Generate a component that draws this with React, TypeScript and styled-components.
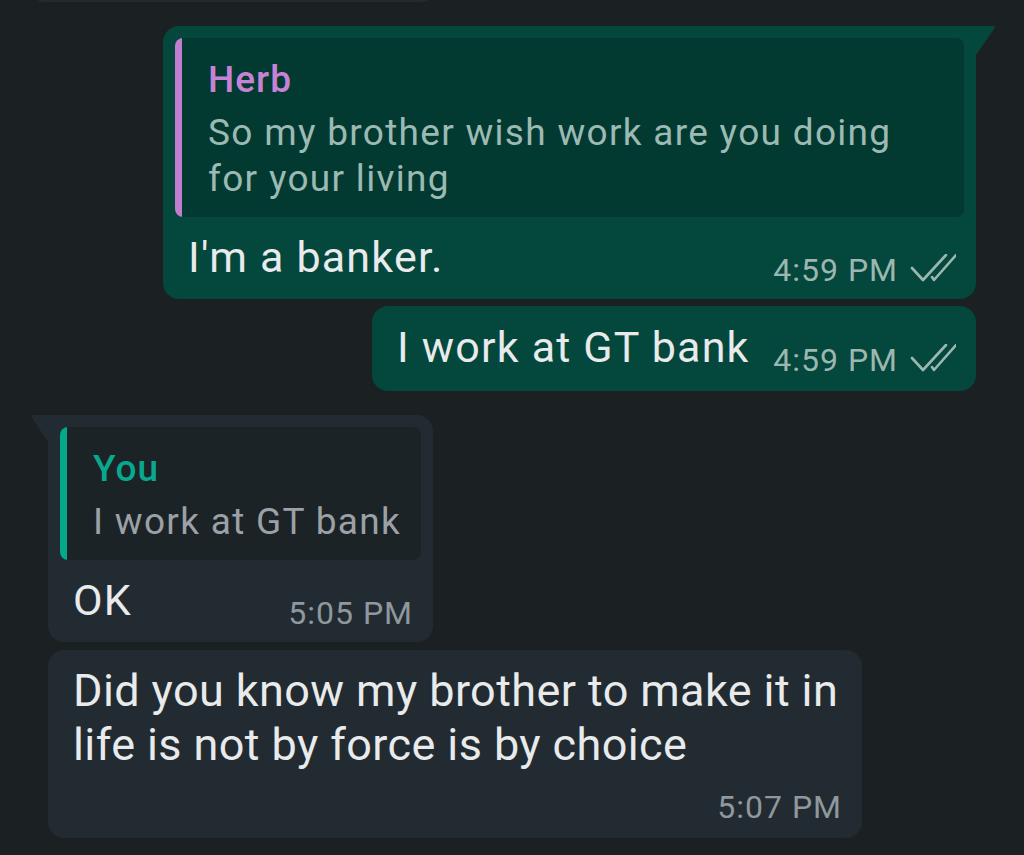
import { ReactNode } from "react"
import styled, { createGlobalStyle, css } from "styled-components"

const GlobalStyle = createGlobalStyle`
  html, body {
    margin: 0;
    padding: 0;
    background: #1b2023;
    overflow: hidden;
  }
  body {
    font-family: Roboto, "Noto Sans", "Liberation Sans", sans-serif;
  }
`

type Side = "out" | "in"

interface QuoteProps {
  side: Side
  name: string
  children: ReactNode
}

function Quote({ side, name, children }: QuoteProps) {
  return (
    <QuoteBox $side={side}>
      <QuoteName $side={side}>{name}</QuoteName>
      <QuoteText $side={side}>{children}</QuoteText>
    </QuoteBox>
  )
}

function DoubleCheck() {
  return (
    <svg width="46" height="28" viewBox="0 0 46 28" fill="none">
      <path
        d="M2 14 L13 26 L36 1"
        stroke="#9cb7b0"
        strokeWidth="2.6"
        strokeLinecap="round"
        strokeLinejoin="round"
      />
      <path
        d="M22 23 L24 26 L46 1"
        stroke="#9cb7b0"
        strokeWidth="2.6"
        strokeLinecap="round"
        strokeLinejoin="round"
      />
    </svg>
  )
}

interface MessageProps {
  side: Side
  width: number
  tail?: boolean
  time: string
  quote?: { name: string; text: string }
  gap: number
  large?: boolean
  children: ReactNode
}

function Message(props: MessageProps) {
  const { side, width, tail, time, quote, gap, large, children } = props

  return (
    <Row $side={side} $gap={gap}>
      <Bubble $side={side} $width={width} $tail={!!tail} $quoted={!!quote}>
        {quote && (
          <Quote side={side} name={quote.name}>
            {quote.text}
          </Quote>
        )}
        <Footer>
          <Text $large={!!large}>{children}</Text>
          <Meta $side={side}>
            <span>{time}</span>
            {side === "out" && <DoubleCheck />}
          </Meta>
        </Footer>
      </Bubble>
    </Row>
  )
}

export default function App() {
  return (
    <Screen>
      <GlobalStyle />
      <Peek />
      <Message
        side="out"
        width={813}
        tail
        gap={24}
        time="4:59 PM"
        quote={{
          name: "Herb",
          text: "So my brother wish work are you doing for your living",
        }}
      >
        I'm a banker.
      </Message>
      <Message side="out" width={604} gap={7} time="4:59 PM">
        I work at GT bank
      </Message>
      <Message
        side="in"
        width={385}
        tail
        gap={24}
        time="5:05 PM"
        quote={{ name: "You", text: "I work at GT bank" }}
      >
        OK
      </Message>
      <Message side="in" width={814} gap={8} time="5:07 PM" large>
        Did you know my brother to make it in life is not by force is by choice
      </Message>
    </Screen>
  )
}

const Screen = styled.div`
  height: 855px;
  overflow: hidden;
`

const Peek = styled.div`
  margin: -12px 0 0 30px;
  width: 405px;
  height: 14px;
  background: #232b30;
  border-radius: 0 0 16px 16px;
`

const Row = styled.div<{ $side: Side; $gap: number }>`
  display: flex;
  margin-top: ${(p) => p.$gap}px;
  justify-content: ${(p) => (p.$side === "out" ? "flex-end" : "flex-start")};
  padding: ${(p) => (p.$side === "out" ? "0 48px 0 0" : "0 0 0 48px")};
`

const Bubble = styled.div<{
  $side: Side
  $width: number
  $tail: boolean
  $quoted: boolean
}>`
  position: relative;
  box-sizing: border-box;
  width: ${(p) => p.$width}px;
  padding: ${(p) => (p.$quoted ? "12px 12px 15px" : "14px 12px 17px")};
  background: ${(p) => (p.$side === "out" ? "#04473c" : "#222b31")};
  border-radius: 16px;

  ${(p) =>
    p.$tail &&
    p.$side === "out" &&
    css`
      border-top-right-radius: 0;
      &::before {
        content: "";
        position: absolute;
        top: 0;
        right: -20px;
        width: 22px;
        height: 32px;
        background: #04473c;
        border-top-right-radius: 3px;
        clip-path: polygon(0 0, 100% 0, 0 100%);
      }
    `}

  ${(p) =>
    p.$tail &&
    p.$side === "in" &&
    css`
      border-top-left-radius: 0;
      &::before {
        content: "";
        position: absolute;
        top: 0;
        left: -18px;
        width: 20px;
        height: 30px;
        background: #222b31;
        border-top-left-radius: 3px;
        clip-path: polygon(0 0, 100% 0, 100% 100%);
      }
    `}
`

const QuoteBox = styled.div<{ $side: Side }>`
  position: relative;
  overflow: hidden;
  padding: 20px 12px 15px 33px;
  margin-bottom: 13px;
  border-radius: 8px;
  background: ${(p) => (p.$side === "out" ? "#023a32" : "#1c2327")};

  &::before {
    content: "";
    position: absolute;
    left: 0;
    top: 0;
    bottom: 0;
    width: 7px;
    background: ${(p) => (p.$side === "out" ? "#c27dd0" : "#06a88c")};
  }
`

const QuoteName = styled.div<{ $side: Side }>`
  font-size: 37px;
  line-height: 44px;
  font-weight: 500;
  letter-spacing: 1px;
  margin-bottom: 8px;
  color: ${(p) => (p.$side === "out" ? "#c683d6" : "#08a88e")};
`

const QuoteText = styled.div<{ $side: Side }>`
  max-width: 700px;
  font-size: 37px;
  line-height: 46px;
  letter-spacing: 1.3px;
  color: ${(p) => (p.$side === "out" ? "#9cbab3" : "#9ba1a6")};
`

const Footer = styled.div`
  display: flex;
  flex-wrap: wrap;
  align-items: flex-end;
  column-gap: 20px;
  row-gap: 19px;
  padding: 0 8px 0 13px;
`

const Text = styled.div<{ $large: boolean }>`
  font-size: ${(p) => (p.$large ? 45 : 43)}px;
  line-height: 54px;
  letter-spacing: ${(p) => (p.$large ? 0.4 : 1.2)}px;
  color: #e8eaeb;
`

const Meta = styled.div<{ $side: Side }>`
  display: flex;
  align-items: center;
  gap: 12px;
  margin-left: auto;
  margin-bottom: -2px;
  font-size: 32px;
  line-height: 32px;
  letter-spacing: 1px;
  color: ${(p) => (p.$side === "out" ? "#9cb7b0" : "#8f989d")};

  svg {
    margin-top: -4px;
  }
`
